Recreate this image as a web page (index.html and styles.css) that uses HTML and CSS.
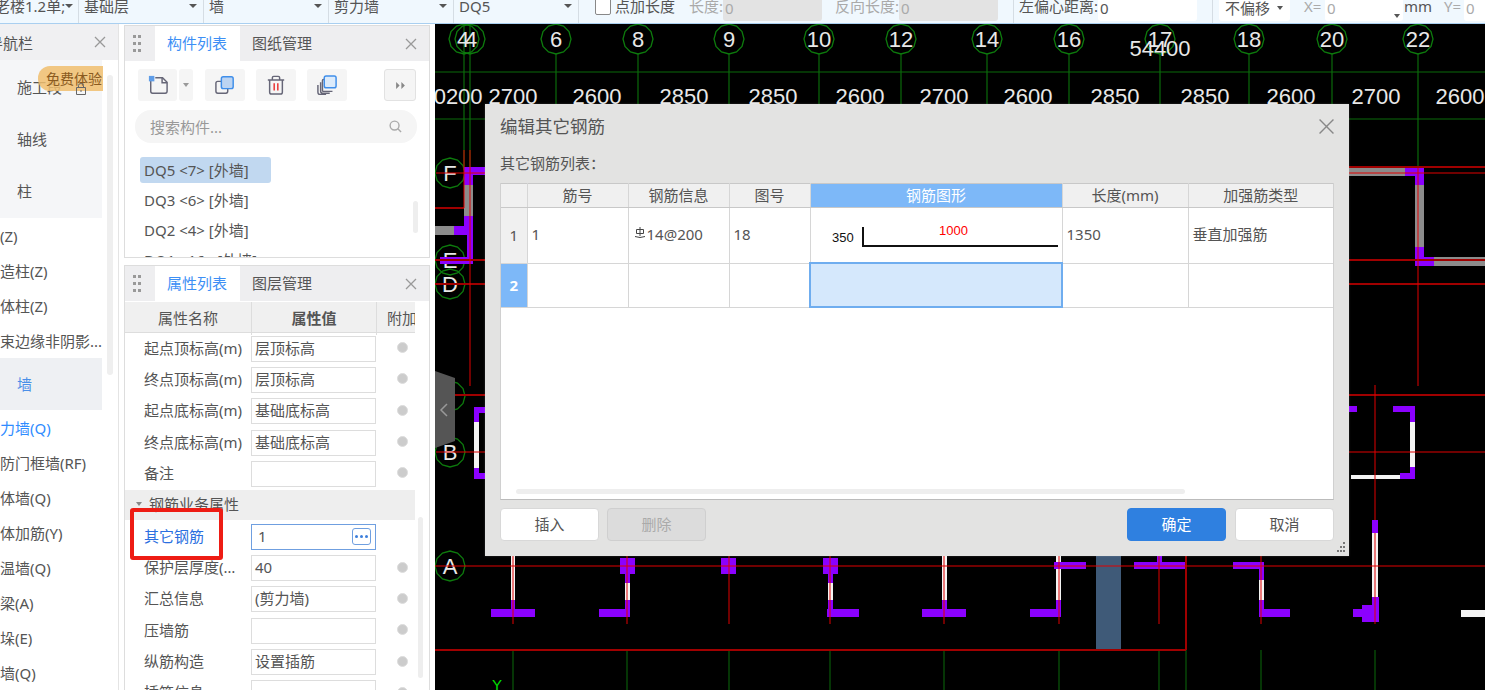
FILE: index.html
```html
<!DOCTYPE html>
<html lang="zh-CN">
<head>
    <meta charset="UTF-8">
    <title>编辑其它钢筋</title>
    <link rel="stylesheet" href="styles.css">
</head>
<body>

<!-- Top property bar, cut off by the top of the window -->
<div class="toolbar">
    <div class="tb-select sel-floor"><span class="floor-name">老楼1.2单;</span><i class="caret"></i></div>
    <div class="tb-select sel-wide"><span>基础层</span><i class="caret"></i></div>
    <div class="tb-select sel-wide"><span>墙</span><i class="caret"></i></div>
    <div class="tb-select sel-wide"><span>剪力墙</span><i class="caret"></i></div>
    <div class="tb-select sel-wide"><span>DQ5</span><i class="caret"></i></div>
    <div class="tb-group group-length">
        <span class="tb-check"></span>
        <span class="tb-label check-label">点加长度</span>
        <span class="tb-label muted">长度:</span>
        <span class="tb-input disabled">0</span>
        <span class="tb-label muted">反向长度:</span>
        <span class="tb-input disabled">0</span>
    </div>
    <div class="tb-group group-offset">
        <span class="tb-label">左偏心距离:</span>
        <span class="tb-input">0</span>
    </div>
    <div class="tb-group group-xy">
        <span class="tb-combo">不偏移<i class="caret"></i></span>
        <span class="tb-label muted label-x">X=</span>
        <span class="tb-input input-x">0<i class="caret spin"></i></span>
        <span class="tb-label label-mm">mm</span>
        <span class="tb-label muted">Y=</span>
        <span class="tb-input input-y">0</span>
    </div>
</div>

<div class="main">
    <!-- Navigation bar -->
    <div class="nav-panel">
        <div class="nav-head">
            <span class="nav-title">导航栏</span>
            <svg class="close-x" viewBox="0 0 12 12"><path d="M1 1l10 10M11 1L1 11"/></svg>
        </div>
        <div class="nav-tabs">
            <div class="nav-tab">施工段</div>
            <div class="nav-tab">轴线</div>
            <div class="nav-tab">柱</div>
        </div>
        <div class="nav-list">
            <div class="nav-item">柱(Z)</div>
            <div class="nav-item">构造柱(Z)</div>
            <div class="nav-item">砌体柱(Z)</div>
            <div class="nav-item">约束边缘非阴影...</div>
        </div>
        <div class="nav-tab nav-tab-active">墙</div>
        <div class="nav-list list-wall">
            <div class="nav-item item-active">剪力墙(Q)</div>
            <div class="nav-item">人防门框墙(RF)</div>
            <div class="nav-item">砌体墙(Q)</div>
            <div class="nav-item">砌体加筋(Y)</div>
            <div class="nav-item">保温墙(Q)</div>
            <div class="nav-item">连梁(A)</div>
            <div class="nav-item">墙垛(E)</div>
            <div class="nav-item">幕墙(Q)</div>
        </div>
        <div class="nav-scroll"></div>
        <div class="trial-badge">免费体验</div>
        <svg class="lock-icon" viewBox="0 0 12 12"><path d="M1.5 4.5h9v7h-9zM3.5 4.5V2.5q0-2 2.500-2t2.500 2v2M6 7v2"/></svg>
    </div>

    <div class="side-col">
        <!-- Component list -->
        <div class="panel panel-parts">
            <div class="panel-head">
                <svg class="grip" viewBox="0 0 8 18"><path d="M0 0h3v3H0zM5 0h3v3H5zM0 7h3v3H0zM5 7h3v3H5zM0 14h3v3H0zM5 14h3v3H5z"/></svg>
                <span class="panel-tab active">构件列表</span>
                <span class="panel-tab">图纸管理</span>
                <svg class="close-x" viewBox="0 0 12 12"><path d="M1 1l10 10M11 1L1 11"/></svg>
            </div>
            <div class="part-tools">
                <span class="tool-btn tool-new">
                    <svg viewBox="0 0 22 22"><path class="ink" d="M3 3v15q0 2 2 2h14q2 0 2-2V8l-5-5H8"/><path class="ink" d="M15.500 3v5.500H21"/><path class="star" d="M1 1h6v6H1z"/></svg>
                </span>
                <span class="tool-btn tool-drop"><i class="caret"></i></span>
                <span class="tool-btn">
                    <svg viewBox="0 0 22 22"><path class="ink" d="M7 7H3q-2 0-2 2v9q0 2 2 2h9q2 0 2-2v-3"/><rect class="front" x="7" y="2" width="13" height="13" rx="2"/></svg>
                </span>
                <span class="tool-btn">
                    <svg viewBox="0 0 22 22"><path class="ink" d="M4 6v13q0 2 2 2h10q2 0 2-2V6M2 5.500h18M7 5V3q0-1.500 1.500-1.500h5Q15 1.500 15 3v2"/><path class="bars" d="M9 9v8M13 9v8"/></svg>
                </span>
                <span class="tool-btn">
                    <svg viewBox="0 0 22 22"><path class="ink" d="M4 8v10q0 2 2 2h8M1 11v8q0 2.500 2.500 2.500H10"/><path class="ink" d="M8 5H7q-1 0-1 1v11q0 1 1 1h10"/><rect class="front front-light" x="8" y="1" width="13" height="13" rx="2"/></svg>
                </span>
                <span class="tool-more">
                    <svg viewBox="0 0 10 8"><path d="M0 0l4 4-4 4zM6 0l4 4-4 4z"/></svg>
                </span>
            </div>
            <div class="part-search">
                <span>搜索构件...</span>
                <svg viewBox="0 0 14 14"><circle cx="6" cy="6" r="4.800"/><path d="M9.500 9.500L13 13"/></svg>
            </div>
            <div class="part-list">
                <div class="part-item selected">DQ5 &lt;7&gt; [外墙]</div>
                <div class="part-item">DQ3 &lt;6&gt; [外墙]</div>
                <div class="part-item">DQ2 &lt;4&gt; [外墙]</div>
                <div class="part-item">DQ1 &lt;16&gt; [外墙]</div>
            </div>
            <div class="part-scroll"></div>
        </div>

        <!-- Property list -->
        <div class="panel panel-props">
            <div class="panel-head">
                <svg class="grip" viewBox="0 0 8 18"><path d="M0 0h3v3H0zM5 0h3v3H5zM0 7h3v3H0zM5 7h3v3H5zM0 14h3v3H0zM5 14h3v3H5z"/></svg>
                <span class="panel-tab active">属性列表</span>
                <span class="panel-tab">图层管理</span>
                <svg class="close-x" viewBox="0 0 12 12"><path d="M1 1l10 10M11 1L1 11"/></svg>
            </div>
            <div class="prop-head">
                <span>属性名称</span>
                <span class="value-head">属性值</span>
                <span class="extra-head">附加</span>
            </div>
            <div class="prop-row"><span class="prop-name">起点顶标高(m)</span><span class="prop-value">层顶标高</span><i class="radio"></i></div>
            <div class="prop-row"><span class="prop-name">终点顶标高(m)</span><span class="prop-value">层顶标高</span><i class="radio"></i></div>
            <div class="prop-row"><span class="prop-name">起点底标高(m)</span><span class="prop-value">基础底标高</span><i class="radio"></i></div>
            <div class="prop-row"><span class="prop-name">终点底标高(m)</span><span class="prop-value">基础底标高</span><i class="radio"></i></div>
            <div class="prop-row"><span class="prop-name">备注</span><span class="prop-value"></span><i class="radio"></i></div>
            <div class="prop-group"><i class="caret"></i>钢筋业务属性</div>
            <div class="prop-row row-rebar">
                <span class="prop-name link">其它钢筋</span>
                <span class="prop-value editing">1<span class="dots-btn"><b></b><b></b><b></b></span></span>
                <span class="highlight"></span>
            </div>
            <div class="prop-row"><span class="prop-name">保护层厚度(mm)</span><span class="prop-value">40</span><i class="radio"></i></div>
            <div class="prop-row"><span class="prop-name">汇总信息</span><span class="prop-value">(剪力墙)</span><i class="radio"></i></div>
            <div class="prop-row"><span class="prop-name">压墙筋</span><span class="prop-value"></span><i class="radio"></i></div>
            <div class="prop-row"><span class="prop-name">纵筋构造</span><span class="prop-value">设置插筋</span><i class="radio"></i></div>
            <div class="prop-row"><span class="prop-name">插筋信息</span><span class="prop-value"></span><i class="radio"></i></div>
            <div class="prop-scroll"></div>
        </div>
    </div>

    <!-- Drawing area, coordinates in the viewBox are window pixels -->
    <div class="canvas">
        <svg class="drawing" viewBox="435 24 1050 666">
            <defs>
                <polygon id="bubble" points="15,0 13,7.500 7.500,13 0,15 -7.500,13 -13,7.500 -15,0 -13,-7.500 -7.500,-13 0,-15 7.500,-13 13,-7.500"/>
            </defs>

            <path class="line-green line-main" d="M435 72H1485M435 119H1485M464 24V170M470 24V170M556 54V110M638 54V110M729 54V110M819 54V110M901 54V110M987 54V110M1069 54V110M1160 54V110M1249 54V110M1332 54V110M1418 54V168"/>
            <path class="line-green" d="M513 650V690M627 650V690M729 650V690M830 650V690M944 650V690M1059 650V690M1159 650V690M1186 650V690M1261 650V690M1375 650V690"/>

            <use class="axis" href="#bubble" x="464" y="39"/>
            <use class="axis" href="#bubble" x="470" y="39"/>
            <use class="axis" href="#bubble" x="556" y="39"/>
            <use class="axis" href="#bubble" x="638" y="39"/>
            <use class="axis" href="#bubble" x="729" y="39"/>
            <use class="axis" href="#bubble" x="819" y="39"/>
            <use class="axis" href="#bubble" x="901" y="39"/>
            <use class="axis" href="#bubble" x="987" y="39"/>
            <use class="axis" href="#bubble" x="1069" y="39"/>
            <use class="axis" href="#bubble" x="1160" y="39"/>
            <use class="axis" href="#bubble" x="1249" y="39"/>
            <use class="axis" href="#bubble" x="1332" y="39"/>
            <use class="axis" href="#bubble" x="1418" y="39"/>
            <use class="axis" href="#bubble" x="450" y="173"/>
            <use class="axis" href="#bubble" x="450" y="260"/>
            <use class="axis" href="#bubble" x="450" y="284"/>
            <use class="axis" href="#bubble" x="450" y="396"/>
            <use class="axis" href="#bubble" x="450" y="452"/>
            <use class="axis" href="#bubble" x="450" y="566"/>

            <g class="label-axis">
                <text x="463" y="47">4</text><text x="471" y="47">4</text>
                <text x="556" y="47">6</text><text x="638" y="47">8</text><text x="729" y="47">9</text>
                <text x="819" y="47">10</text><text x="901" y="47">12</text><text x="987" y="47">14</text>
                <text x="1069" y="47">16</text><text x="1160" y="47">17</text><text x="1249" y="47">18</text>
                <text x="1332" y="47">20</text><text x="1418" y="47">22</text>
                <text x="1160" y="56">54400</text>
                <text x="452" y="104">00200</text>
                <text x="513" y="104">2700</text><text x="597" y="104">2600</text><text x="684" y="104">2850</text>
                <text x="773" y="104">2850</text><text x="860" y="104">2600</text><text x="944" y="104">2700</text>
                <text x="1028" y="104">2600</text><text x="1115" y="104">2850</text><text x="1205" y="104">2850</text>
                <text x="1291" y="104">2600</text><text x="1376" y="104">2700</text><text x="1460" y="104">2600</text>
                <text x="450" y="181">F</text><text x="450" y="268">E</text><text x="450" y="292">D</text>
                <text x="450" y="460">B</text><text x="450" y="574">A</text>
            </g>

            <path class="wall-gray" d="M464 185h9v31h-9zM435 226h19v9h-19zM1349 167h56v9h-56zM1415 185h9v62h-9zM1434 257h51v9h-51z"/>
            <path class="wall-white" d="M474 422h5v46h-5zM1410 422h5v45h-5zM1351 475h49v4h-49zM511 556h4v44h-4zM625 583h5v17h-5zM828 583h5v17h-5zM942 556h5v44h-5zM1056 556h5v44h-5zM1259 580h5v20h-5zM1372 533h6v64h-6zM1461 610h24v7h-24z"/>
            <path class="wall-purple" d="M464 167h21v8h-21zM464 175h9v10h-9zM464 216h9v10h-9zM454 226h19v9h-19zM467 235h6v22h-6zM440 257h33v7h-33zM474 407h11v6h-11zM474 413h5v9h-5zM474 468h5v5h-5zM474 473h11v6h-11zM1405 167h19v9h-19zM1415 176h9v9h-9zM1415 247h9v10h-9zM1415 257h19v9h-19zM1349 406h8v6h-8zM1393 406h22v6h-22zM1410 412h5v10h-5zM1410 467h5v6h-5zM1400 473h15v6h-15z"/>
            <path class="wall-purple" d="M511 600h4v9h-4zM491 609h44v8h-44zM620 558h15v16h-15zM625 574h5v9h-5zM625 600h5v9h-5zM599 609h31v8h-31zM721 558h15v16h-15zM823 558h15v16h-15zM828 574h5v9h-5zM828 600h5v9h-5zM827 609h32v8h-32zM942 600h5v9h-5zM922 609h44v8h-44zM1056 600h5v9h-5zM1030 609h31v8h-31zM1054 562h32v7h-32zM1134 562h52v7h-52zM1157 556h5v6h-5zM1233 562h31v7h-31zM1259 569h5v11h-5zM1259 600h5v9h-5zM1259 609h31v8h-31zM1372 520h6v13h-6zM1372 597h7v8h-7zM1362 605h17v17h-17zM1353 609h9v8h-9z"/>
            <rect class="wall-steel" x="1096" y="556" width="25" height="94"/>

            <path class="line-dark" d="M435 208H464M435 260H485M435 284H485M455 395H485M1349 167H1485M1349 260H1485M1349 284H1485M1349 395H1485M435 650H1186M1186 556V650"/>
            <path class="line-red" d="M464 150V208M470 150V386M436 173H485M1349 173H1485M1418 168V386M1375 385V520M436 452H485M1349 452H1485M435 566H1485M513 556V624M627 556V624M729 556V624M830 556V624M944 556V624M1059 556V624M1159 556V624M1261 556V624M1375 533V624"/>

            <text class="label-y" x="492" y="690">Y</text>

            <polygon class="collapse" points="435,371 455,378 455,441 435,448"/>
            <path class="collapse-arrow" d="M447 404l-6 6 6 6"/>
        </svg>

        <!-- Edit dialog -->
        <div class="dialog">
            <div class="dialog-head">
                <span>编辑其它钢筋</span>
                <svg class="dialog-close" viewBox="0 0 14 14"><path d="M.500.500l13 13M13.500.500l-13 13"/></svg>
            </div>
            <div class="dialog-sub">其它钢筋列表：</div>
            <div class="grid-wrap">
                <table class="rebar-grid">
                    <colgroup>
                        <col class="c-index"><col class="c-no"><col class="c-info"><col class="c-fig"><col class="c-shape"><col class="c-len"><col class="c-type">
                    </colgroup>
                    <tr class="grid-head">
                        <th></th><th>筋号</th><th>钢筋信息</th><th>图号</th><th class="current">钢筋图形</th><th>长度(mm)</th><th>加强筋类型</th>
                    </tr>
                    <tr class="row-one">
                        <td class="index">1</td>
                        <td>1</td>
                        <td><svg class="rebar-grade" viewBox="0 0 12 12"><path d="M2.500 2.500h7v4h-7zM6 0v9M1 9.500q5 2 10 0"/></svg>14@200</td>
                        <td>18</td>
                        <td class="shape-cell">
                            <svg class="shape" viewBox="0 0 250 54">
                                <text class="dim" x="21" y="34">350</text>
                                <path class="bend" d="M52 19V38H247"/>
                                <text class="dim dim-red" x="128" y="27">1000</text>
                            </svg>
                        </td>
                        <td>1350</td>
                        <td>垂直加强筋</td>
                    </tr>
                    <tr class="row-two">
                        <td class="index current">2</td>
                        <td></td><td></td><td></td>
                        <td class="picked"></td>
                        <td></td><td></td>
                    </tr>
                </table>
                <div class="grid-scroll"></div>
            </div>
            <div class="dialog-foot">
                <span class="btn">插入</span>
                <span class="btn btn-off">删除</span>
                <span class="btn btn-ok">确定</span>
                <span class="btn">取消</span>
            </div>
            <svg class="resize-grip" viewBox="0 0 10 10"><path d="M7 0h2v2H7zM4 4h2v2H4zM7 4h2v2H7zM1 8h2v2H1zM4 8h2v2H4zM7 8h2v2H7z"/></svg>
        </div>
    </div>
</div>

</body>
</html>
```

FILE: styles.css
```css
* {
    box-sizing: border-box;
}

html, body {
    height: 100%;
}

body {
    margin: 0;
    overflow: hidden;
    background-color: #fff;
    color: #555;
    font-family: "Noto Sans", "Noto Sans CJK SC", sans-serif;
    font-size: 15px;
    display: flex;
    flex-direction: column;
}

.caret {
    display: inline-block;
    width: 0;
    height: 0;
    border-left: 4px solid transparent;
    border-right: 4px solid transparent;
    border-top: 4px solid #555;
}

.close-x {
    width: 12px;
    height: 12px;
    fill: none;
    stroke: #999;
    stroke-width: 1.3;
}

/* Top bar */
.toolbar {
    height: 24px;
    flex: none;
    display: flex;
    overflow: hidden;
    background-color: #f0f8fe;
    border-bottom: 1px solid #a9cff0;
    line-height: 12px;
}

.tb-select {
    flex: none;
    display: flex;
    justify-content: space-between;
    align-items: center;
    height: 23px;
    padding: 0 6px 12px 5px;
    border-right: 1px solid #d5dde4;
    white-space: nowrap;
}

.sel-floor {
    width: 79px;
    overflow: hidden;
    padding-left: 0;
}

.floor-name {
    margin-left: -5px;
}

.sel-wide {
    width: 125px;
}

.tb-group {
    flex: none;
    display: flex;
    align-items: center;
    height: 23px;
    padding-bottom: 12px;
    border-right: 1px solid #d5dde4;
    white-space: nowrap;
}

.group-length {
    width: 435px;
    padding-left: 16px;
}

.group-offset {
    width: 199px;
    padding-left: 5px;
}

.group-xy {
    width: 272px;
    overflow: hidden;
    border-right: none;
    padding-left: 6px;
}

.tb-check {
    width: 16px;
    height: 24px;
    margin-top: -6px;
    background-color: #fff;
    border: 1px solid #888;
    border-radius: 2px;
    flex: none;
}

.tb-label {
    flex: none;
}

.check-label {
    margin: 0 14px 0 4px;
}

.muted {
    color: #aaa;
}

.tb-input {
    width: 99px;
    height: 24px;
    margin: 6px 13px 0 0;
    padding: 5px 0 0 2px;
    background-color: #fff;
    border-radius: 3px;
    position: relative;
    flex: none;
}

.tb-input.disabled {
    background-color: #e3e3e3;
    color: #aaa;
}

.tb-combo {
    width: 71px;
    height: 24px;
    margin-top: 6px;
    padding: 5px 0 0 6px;
    background-color: #fff;
    border-radius: 3px;
    display: flex;
    gap: 7px;
    overflow: hidden;
    flex: none;
}

.tb-combo .caret {
    margin-top: 4px;
    border-left-width: 3px;
    border-right-width: 3px;
}

.label-x {
    margin-left: 14px;
    width: 21px;
}

.input-x {
    width: 78px;
    margin-right: 1px;
    color: #aaa;
}

.spin {
    position: absolute;
    right: 3px;
    bottom: 3px;
    border-left-width: 3px;
    border-right-width: 3px;
}

.label-mm {
    width: 40px;
}

.input-y {
    width: 30px;
    margin: 6px 0 0 3px;
    color: #aaa;
}

/* Page body */
.main {
    flex: 1;
    display: flex;
    min-height: 0;
}

.nav-panel {
    width: 119px;
    flex: none;
    position: relative;
    overflow: hidden;
    background-color: #fff;
    border-right: 1px solid #e4e4e4;
}

.nav-head {
    height: 36px;
    display: flex;
    align-items: center;
    justify-content: space-between;
    padding-right: 12px;
    background-color: #f0f0f2;
}

.nav-title {
    margin-left: -12px;
}

.nav-tabs {
    width: 102px;
    padding-top: 2px;
    background-color: #f5f6f8;
}

.nav-tab {
    width: 102px;
    height: 52px;
    padding-left: 17px;
    line-height: 50px;
}

.nav-tab-active {
    margin-top: -1.5px;
    background-color: #eef0f3;
    color: #4a8fe8;
    line-height: 52px;
}

.nav-list {
    padding-top: 1.5px;
    margin-left: -15px;
}

.nav-item {
    height: 35px;
    line-height: 33px;
    white-space: nowrap;
}

.item-active {
    color: #2f8cff;
}

.nav-scroll {
    position: absolute;
    left: 107px;
    top: 51px;
    width: 6px;
    height: 300px;
    background-color: #efefef;
    border-radius: 3px;
}

.trial-badge {
    position: absolute;
    left: 38px;
    top: 42px;
    width: 65px;
    height: 25px;
    padding-left: 8px;
    line-height: 25px;
    font-size: 14px;
    color: #8a5a20;
    background-color: rgba(240, 190, 110, 0.85);
    border-radius: 12px 0 0 12px;
    white-space: nowrap;
    overflow: hidden;
}

.lock-icon {
    position: absolute;
    left: 75px;
    top: 59px;
    width: 12px;
    height: 12px;
    fill: none;
    stroke: #666;
    stroke-width: 1;
}

.side-col {
    width: 316px;
    flex: none;
    padding: 1px 5px 0;
    display: flex;
    flex-direction: column;
    gap: 7px;
}

.panel {
    width: 306px;
    position: relative;
    overflow: hidden;
    background-color: #fff;
    border: 1px solid #ddd;
    flex: none;
}

.panel-parts {
    height: 233px;
}

.panel-props {
    flex: 1;
    border-bottom: none;
}

.panel-head {
    height: 35px;
    display: flex;
    align-items: center;
    background-color: #eeeef0;
}

.grip {
    width: 8px;
    height: 18px;
    margin: 0 14px 0 8px;
    fill: #999;
}

.panel-tab {
    height: 100%;
    padding: 0 12px;
    line-height: 35px;
    white-space: nowrap;
}

.panel-tab.active {
    width: 85px;
    background-color: #fff;
    color: #3d8ff5;
}

.panel-head .close-x {
    margin-left: auto;
    margin-right: 12px;
}

/* Component list */
.part-tools {
    display: flex;
    padding: 8px 0 0 13px;
    height: 49px;
}

.tool-btn {
    width: 40px;
    height: 32px;
    margin-right: 11px;
    display: flex;
    align-items: center;
    justify-content: center;
    background-color: #f5f5f5;
    border-radius: 3px;
}

.tool-btn svg {
    width: 20px;
    height: 20px;
}

.tool-new {
    width: 39px;
    margin-right: 2px;
}

.tool-drop {
    width: 14px;
    margin-right: 12px;
}

.tool-drop .caret {
    border-top-color: #999;
    border-left-width: 3px;
    border-right-width: 3px;
}

.ink {
    fill: none;
    stroke: #667;
    stroke-width: 1.6;
}

.star {
    fill: #5f9de8;
}

.front {
    fill: #bcd4f2;
    stroke: #3f8eea;
    stroke-width: 1.6;
}

.front-light {
    fill: #dcebfb;
}

.bars {
    fill: none;
    stroke: #e83030;
    stroke-width: 1.6;
}

.tool-more {
    width: 32px;
    height: 32px;
    margin-left: 26px;
    display: flex;
    align-items: center;
    justify-content: center;
    background-color: #f5f5f5;
    border: 1px solid #e2e2e2;
    border-radius: 3px;
}

.tool-more svg {
    width: 9px;
    height: 7px;
    fill: #888;
}

.part-search {
    height: 33px;
    margin: 0 12px 0 10px;
    padding: 0 15px;
    display: flex;
    align-items: center;
    justify-content: space-between;
    background-color: #f5f5f5;
    border-radius: 16px;
    color: #999;
}

.part-search svg {
    width: 13px;
    height: 13px;
    fill: none;
    stroke: #aaa;
    stroke-width: 1.5;
}

.part-list {
    padding: 14px 0 0 15px;
}

.part-item {
    width: 131px;
    height: 30px;
    padding-left: 4px;
    line-height: 26px;
    white-space: nowrap;
}

.part-item.selected {
    height: 26px;
    margin-bottom: 4px;
    background-color: #c1d8f0;
    border-radius: 3px;
}

.part-scroll {
    position: absolute;
    left: 288px;
    top: 175px;
    width: 5px;
    height: 32px;
    background-color: #eee;
    border-radius: 3px;
}

/* Property list */
.prop-head {
    width: 290px;
    height: 31px;
    margin-top: 1px;
    display: grid;
    grid-template-columns: 126px 126px 38px;
    background-color: #f0f0f0;
    border-bottom: 1px solid #ddd;
    line-height: 33px;
    text-align: center;
}

.value-head {
    font-weight: 700;
    border-left: 1px solid #ddd;
    border-right: 1px solid #ddd;
}

.extra-head {
    overflow: hidden;
    white-space: nowrap;
    text-align: left;
    padding-left: 10px;
}

.prop-row {
    width: 290px;
    height: 31.33px;
    display: grid;
    grid-template-columns: 126px 126px 38px;
    align-items: center;
    position: relative;
}

.prop-name {
    padding: 0 6px 3px 19px;
    white-space: nowrap;
    overflow: hidden;
    text-overflow: ellipsis;
}

.prop-name.link {
    color: #2b6fe0;
}

.prop-value {
    width: 125px;
    height: 26px;
    padding-left: 3px;
    line-height: 22px;
    border: 1px solid #ddd;
    white-space: nowrap;
    position: relative;
}

.prop-value.editing {
    padding-left: 6px;
    border-color: #6f9fe0;
}

.dots-btn {
    position: absolute;
    right: 4px;
    top: 3px;
    width: 19px;
    height: 17px;
    display: flex;
    align-items: center;
    justify-content: center;
    gap: 2px;
    border: 1px solid #6f9fe0;
    border-radius: 3px;
}

.dots-btn b {
    width: 3px;
    height: 3px;
    background-color: #3d7fdc;
    border-radius: 50%;
}

.radio {
    width: 11px;
    height: 11px;
    margin: 0 0 2px 20px;
    background-color: #ccc;
    border: 1px solid #ddd;
    border-radius: 50%;
}

.prop-group {
    width: 290px;
    height: 30.5px;
    margin: 0 0 1px;
    padding: 0 0 2px 11px;
    display: flex;
    align-items: center;
    gap: 7px;
    background-color: #eee;
    line-height: 30px;
}

.prop-group .caret {
    border-top-color: #888;
    border-left-width: 3px;
    border-right-width: 3px;
}

.highlight {
    position: absolute;
    left: 5px;
    top: -13px;
    width: 93px;
    height: 52px;
    border: 4px solid #ee1c14;
    border-radius: 3px;
}

.prop-scroll {
    position: absolute;
    left: 293px;
    top: 251px;
    width: 5px;
    height: 161px;
    background-color: #eee;
    border-radius: 3px;
}

/* Drawing */
.canvas {
    flex: 1;
    position: relative;
    overflow: hidden;
    background-color: #000;
}

.drawing {
    display: block;
    width: 1050px;
    height: 666px;
}

.line-green {
    fill: none;
    stroke: #0a6a0a;
    stroke-width: 1;
}

.line-main {
    stroke-width: 1.200;
}

.axis {
    fill: none;
    stroke: #0d7a0d;
    stroke-width: 1.300;
}

.label-axis text {
    fill: #e8e8e8;
    font-family: "Liberation Sans", sans-serif;
    font-size: 22px;
    text-anchor: middle;
}

.wall-gray {
    fill: #8c8c8c;
}

.wall-white {
    fill: #f4f4f4;
}

.wall-purple {
    fill: #8b00ff;
}

.wall-steel {
    fill: #3f5a78;
}

.line-dark {
    fill: none;
    stroke: #a00000;
    stroke-width: 2;
}

.line-red {
    fill: none;
    stroke: #e00000;
    stroke-width: 1;
}

.label-y {
    fill: #00e000;
    font-family: "Liberation Sans", sans-serif;
    font-size: 15px;
}

.collapse {
    fill: #555;
}

.collapse-arrow {
    fill: none;
    stroke: #999;
    stroke-width: 1.5;
}

/* Dialog */
.dialog {
    position: absolute;
    left: 50px;
    top: 80px;
    width: 864px;
    height: 452px;
    padding: 14px 15px 0;
    background-color: #e3e3e2;
    box-shadow: 0 0 2px rgba(255, 255, 255, 0.2);
}

.dialog-head {
    height: 20px;
    padding-bottom: 4px;
    display: flex;
    justify-content: space-between;
    align-items: center;
    font-size: 17.500px;
    line-height: 16px;
}

.dialog-close {
    width: 15px;
    height: 15px;
    flex: none;
    fill: none;
    stroke: #888;
    stroke-width: 1.3;
}

.dialog-sub {
    margin-top: 16px;
    height: 20px;
    line-height: 18px;
}

.grid-wrap {
    width: 834px;
    height: 317px;
    margin-top: 9px;
    position: relative;
    background-color: #fff;
    border-bottom: 1px solid #bbb;
    border-left: 1px solid #d0d0d0;
    border-right: 1px solid #d0d0d0;
}

.rebar-grid {
    width: 832px;
    table-layout: fixed;
    border-collapse: collapse;
}

.c-index { width: 26px; }
.c-no { width: 101px; }
.c-info { width: 101px; }
.c-fig { width: 81px; }
.c-shape { width: 252px; }
.c-len { width: 126px; }
.c-type { width: 145px; }

.rebar-grid th,
.rebar-grid td {
    padding: 0 0 3px 4px;
    border: 1px solid #d6d6d6;
    white-space: nowrap;
    overflow: hidden;
}

.rebar-grid tr > :first-child {
    border-left: none;
}

.rebar-grid tr > :last-child {
    border-right: none;
}

.grid-head {
    height: 24px;
}

.rebar-grid th {
    padding: 0 0 2px;
    background-color: #f0f0f0;
    font-weight: 400;
    text-align: center;
    border-top: 1px solid #c8c8c8;
    border-bottom-color: #c8c8c8;
}

.rebar-grid th.current {
    background-color: #7db8f8;
    color: #fff;
}

.row-one {
    height: 55px;
}

.row-two {
    height: 44px;
}

.rebar-grid td.index {
    padding: 0;
    background-color: #f0f0f0;
    text-align: center;
}

.rebar-grid td.index.current {
    background-color: #7db8f8;
    color: #fff;
    font-weight: 700;
}

.rebar-grade {
    width: 12px;
    height: 12px;
    margin: 0 1px 5px 1px;
    vertical-align: middle;
    fill: none;
    stroke: #444;
    stroke-width: 1;
}

.rebar-grid td.shape-cell {
    padding: 0;
}

.shape {
    display: block;
    width: 250px;
    height: 54px;
}

.dim {
    font-family: "Liberation Sans", sans-serif;
    font-size: 13px;
    fill: #111;
}

.dim-red {
    fill: #f00;
}

.bend {
    fill: none;
    stroke: #111;
    stroke-width: 2;
}

.rebar-grid td.picked {
    background-color: #d5e8fc;
    border: 2px solid #6fadef;
}

.grid-scroll {
    position: absolute;
    left: 15px;
    bottom: 5px;
    width: 669px;
    height: 5px;
    background-color: #eee;
    border-radius: 3px;
}

.dialog-foot {
    display: flex;
    gap: 8px;
    margin-top: 8px;
}

.btn {
    width: 99px;
    height: 33px;
    line-height: 31px;
    text-align: center;
    background-color: #fff;
    border: 1px solid #d8d8d8;
    border-radius: 4px;
}

.btn-off {
    background-color: #dcdcdc;
    border-color: #cfcfcf;
    color: #aaa;
}

.btn-ok {
    margin-left: auto;
    margin-right: 1px;
    background-color: #2f80e0;
    border-color: #2f80e0;
    color: #fff;
}

.resize-grip {
    position: absolute;
    right: 3px;
    bottom: 4px;
    width: 10px;
    height: 10px;
    fill: #777;
}
```
